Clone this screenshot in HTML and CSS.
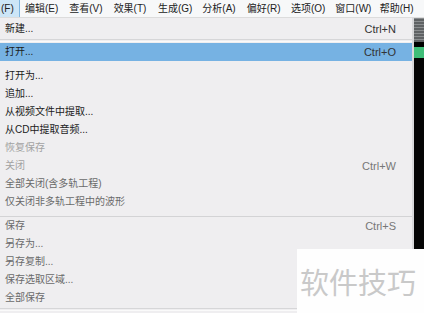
FILE: index.html
```html
<!DOCTYPE html>
<html lang="zh-CN">
<head>
    <meta charset="UTF-8">
    <meta name="viewport" content="width=device-width, initial-scale=1.0">
    <title>文件菜单</title>
    <link rel="stylesheet" href="styles.css">
</head>
<body>

    <!-- Menu bar -->
    <div class="menubar">
        <span class="menu-item active">(F)</span>
        <span class="menu-item">编辑(E)</span>
        <span class="menu-item">查看(V)</span>
        <span class="menu-item">效果(T)</span>
        <span class="menu-item">生成(G)</span>
        <span class="menu-item">分析(A)</span>
        <span class="menu-item">偏好(R)</span>
        <span class="menu-item">选项(O)</span>
        <span class="menu-item">窗口(W)</span>
        <span class="menu-item">帮助(H)</span>
    </div>

    <div class="main">
        <!-- File dropdown -->
        <div class="dropdown">
            <div class="row first"><span>新建...</span><span class="key">Ctrl+N</span></div>
            <div class="sep"></div>
            <div class="row selected"><span>打开...</span><span class="key">Ctrl+O</span></div>
            <div class="gap"></div>
            <div class="row"><span>打开为...</span></div>
            <div class="row"><span>追加...</span></div>
            <div class="row"><span>从视频文件中提取...</span></div>
            <div class="row"><span>从CD中提取音频...</span></div>
            <div class="row disabled"><span>恢复保存</span></div>
            <div class="row disabled"><span>关闭</span><span class="key">Ctrl+W</span></div>
            <div class="row dim"><span>全部关闭(含多轨工程)</span></div>
            <div class="row dim"><span>仅关闭非多轨工程中的波形</span></div>
            <div class="sep wide"></div>
            <div class="row dim"><span>保存</span><span class="key">Ctrl+S</span></div>
            <div class="row dim"><span>另存为...</span></div>
            <div class="row dim"><span>另存复制...</span></div>
            <div class="row dim"><span>保存选取区域...</span></div>
            <div class="row dim"><span>全部保存</span></div>
            <div class="sep"></div>
            <div class="row dim"><span>批处理</span></div>
        </div>

        <!-- Editor behind the menu -->
        <div class="side">
            <div class="side-top"></div>
            <div class="side-green"></div>
            <div class="side-dark"></div>
        </div>
    </div>

    <!-- Watermark -->
    <div class="watermark">软件技巧</div>

</body>
</html>
```

FILE: styles.css
```css
* { margin: 0; padding: 0; box-sizing: border-box; }
body {
    width: 424px;
    height: 313px;
    overflow: hidden;
    position: relative;
    background: #000;
    font-family: "Liberation Sans", "Noto Sans CJK SC", sans-serif;
    font-size: 10px;
    color: #1b1b1b;
}

/* Menu bar */
.menubar {
    display: flex;
    height: 18px;
    background: #f7f8f9;
    border-bottom: 1px solid #dcdcdc;
    white-space: nowrap;
    overflow: hidden;
}
.menu-item {
    line-height: 17px;
    padding: 0 6px;
    margin-right: 0;
    color: #222;
}
.menu-item + .menu-item { margin-right: 0; }
.menu-item.active {
    width: 20px;
    padding: 0 0 0 1px;
    margin-right: 5px;
    background: #cde6f7;
    border-right: 1px solid #7fb6e0;
}
.menu-item:nth-child(n+2) { width: 44.5px; padding: 0; }

/* Body */
.main {
    display: flex;
    height: 295px;
}
.dropdown {
    width: 414px;
    background: #efeef0;
    border-right: 2px solid #d9d9db;
    display: flex;
    flex-direction: column;
    overflow: hidden;
}
.row {
    flex: none;
    display: flex;
    justify-content: space-between;
    height: 18px;
    line-height: 18px;
    padding: 0 16px 0 5px;
    white-space: nowrap;
}
.row.first { margin-top: 2px; }
.row.selected { background: #76b2e3; }
.row.disabled { color: #a2a2a2; }
.row.dim { color: #6a6a6a; }
.key {
    font-size: 11px;
    color: #333;
}
.row.disabled .key, .row.dim .key { color: #777; }
.sep {
    flex: none;
    height: 3px;
    margin: 1px 0;
    border-bottom: 1px solid #fafafa;
    box-shadow: 0 1px 0 #d6d6d8 inset;
}
.sep.wide { height: 4px; margin: 2px 0 0; border-top: 2px solid #efeef0; border-bottom: none; box-shadow: 0 -1px 0 #d3d3d5 inset; }
.gap { flex: none; height: 6px; }

/* Editor strip behind the menu */
.side {
    flex: 1;
    display: flex;
    flex-direction: column;
}
.side-top {
    height: 24px;
    background: repeating-linear-gradient(0deg, #5f6264 0 2px, #8a8d8f 2px 3px);
}
.side-green {
    height: 11px;
    margin-top: 5px;
    background: #3fbe78;
}
.side-dark { flex: 1; background: #050505; }

/* Watermark */
.watermark {
    position: absolute;
    left: 297px;
    top: 249px;
    width: 127px;
    height: 64px;
    background: #fefefe;
    color: #c9c9c9;
    font-family: "Noto Sans CJK SC", sans-serif;
    font-size: 29px;
    line-height: 64px;
    padding-left: 3px;
    white-space: nowrap;
}
```
